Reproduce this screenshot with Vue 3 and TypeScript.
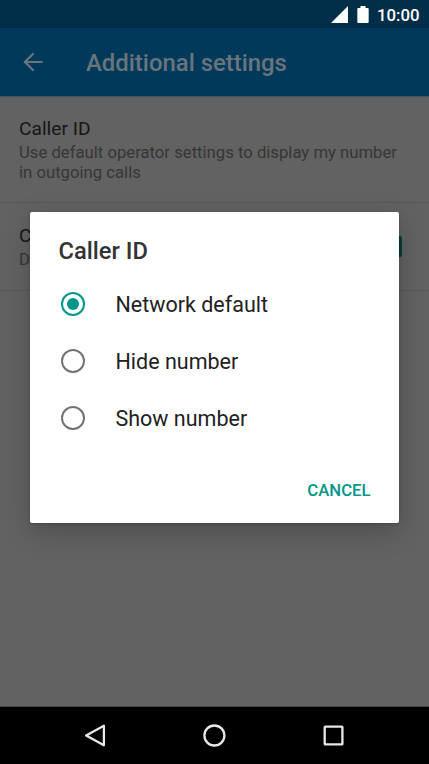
<script setup lang="ts">
import { ref } from 'vue'

interface Setting {
  title: string
  summary: string
  checked?: boolean
}

const settings: Setting[] = [
  { title: 'Caller ID', summary: 'Use default operator settings to display my number in outgoing calls' },
  { title: 'C', summary: 'D', checked: true },
]
const options: string[] = ['Network default', 'Hide number', 'Show number']
const selected = ref<string>('Network default')
</script>

<template>
  <div class="phone">
    <div class="status">
      <svg class="signal" viewBox="0 0 17 17"><path d="M0 17 17 0v17z" fill="#fff" /></svg>
      <svg class="battery" viewBox="0 0 12 18"><path d="M3.3 0h5.4v2H11q1 0 1 1v14q0 1-1 1H1q-1 0-1-1V3q0-1 1-1h2.3z" fill="#fff" /></svg>
      <span class="clock">10:00</span>
    </div>
    <header class="toolbar">
      <svg class="back" viewBox="0 0 20 20" fill="none" stroke="#69757d" stroke-width="2.2"><path d="M19.6 10H2M10.7 1.2 1.9 10l8.8 8.8" /></svg>
      <h1>Additional settings</h1>
    </header>
    <main class="list">
      <section v-for="s in settings" :key="s.title" class="item">
        <div class="copy">
          <h2>{{ s.title }}</h2>
          <p>{{ s.summary }}</p>
        </div>
        <span v-if="s.checked" class="check"></span>
      </section>
    </main>
    <nav class="nav">
      <svg viewBox="0 0 24 24"><path d="M20.9 1.7v19.6L3.1 11.5z" /></svg>
      <svg viewBox="0 0 24 24"><circle cx="12.4" cy="11.5" r="10" /></svg>
      <svg viewBox="0 0 24 24"><rect x="3.7" y="2.7" width="17.7" height="17.7" rx=".5" /></svg>
    </nav>
    <div class="dialog" role="dialog">
      <h2 class="heading">Caller ID</h2>
      <label v-for="o in options" :key="o" class="option" @click="selected = o">
        <span class="radio" :class="{ on: selected === o }"></span>
        <span class="name">{{ o }}</span>
      </label>
      <div class="actions"><button>CANCEL</button></div>
    </div>
  </div>
</template>

<style>
body { margin: 0; background: #000; }
</style>
<style scoped>
.phone { position: relative; display: flex; flex-direction: column; width: 429px; height: 764px; overflow: hidden; background: #626262; font-family: Roboto, sans-serif; }
h1, h2, p { margin: 0; font-weight: 400; }
svg { display: block; flex: none; }
.status { display: flex; align-items: center; justify-content: flex-end; height: 28px; padding-right: 9.5px; box-sizing: border-box; background: #002d48; color: #fff; }
.signal { width: 17px; height: 17px; margin: 1px 9px 0 0; }
.battery { width: 12px; height: 17px; margin: 1px 8px 0 0; }
.clock { font-size: 16.8px; font-weight: 500; line-height: 28px; margin-top: 2px; }
.toolbar { display: flex; align-items: center; height: 68px; padding-left: 23px; box-sizing: border-box; background: #003959; box-shadow: 0 1px 1px #48525a; }
.back { width: 20px; height: 20px; }
h1 { margin-left: 43px; font-size: 23.9px; font-weight: 500; line-height: 28px; padding-top: 2px; color: #69757d; white-space: nowrap; }
.list { flex: 1; }
.item { display: flex; align-items: center; justify-content: space-between; height: 107px; padding: 0 27px 0 19px; box-sizing: border-box; border-bottom: 1px solid #585858; }
.item:last-child { height: 88px; }
.copy { width: 382px; flex: none; padding-top: 2px; }
.item:last-child .copy { width: auto; padding-top: 1px; }
.item h2 { font-size: 19.2px; line-height: 24px; padding-bottom: 2px; color: #161616; }
.item p { font-size: 16.7px; line-height: 20px; color: #363636; }
.check { width: 21px; height: 21px; border-radius: 2px; background: #003e37; }
.nav { display: flex; align-items: center; justify-content: center; gap: 95px; height: 58px; padding-right: 1px; background: #000; border-top: 1px solid #444; box-sizing: border-box; }
.nav svg { width: 24px; height: 24px; fill: none; stroke: #e8e8e8; stroke-width: 2.3; stroke-linejoin: round; }
.dialog { position: absolute; left: 30px; top: 212px; width: 369px; height: 311px; box-sizing: border-box; padding: 24px 28.5px 0 28.5px; background: #fff; border-radius: 2px; box-shadow: 0 8px 28px rgba(0,0,0,.22), 0 1px 3px rgba(0,0,0,.2); }
.heading { font-size: 23.7px; font-weight: 500; line-height: 30px; color: #333; padding-bottom: 9px; }
.option { display: flex; align-items: center; height: 57.3px; }
.radio { display: flex; align-items: center; justify-content: center; width: 24px; height: 24px; margin-left: 2px; box-sizing: border-box; border: 2.4px solid #737373; border-radius: 50%; }
.radio.on { border-color: #009688; }
.radio.on::after { content: ''; width: 12px; height: 12px; border-radius: 50%; background: #009688; }
.name { margin: 2.5px 0 0 31px; font-size: 21.5px; line-height: 28px; color: #212121; }
.actions { display: flex; justify-content: flex-end; margin-top: 33.3px; }
button { padding: 0; border: 0; background: none; font: 500 16.7px/22px Roboto, sans-serif; color: #009688; }
</style>
